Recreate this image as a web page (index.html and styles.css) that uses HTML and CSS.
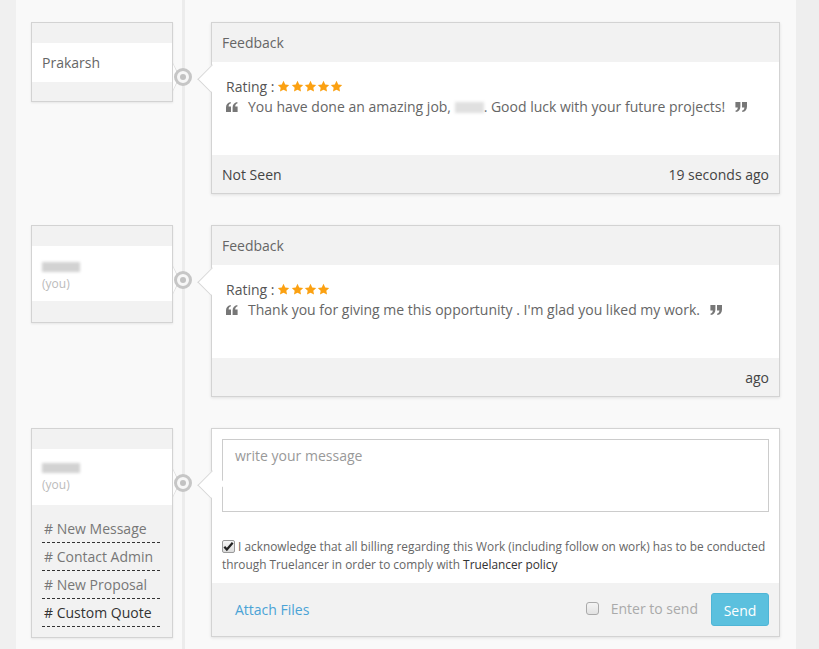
FILE: index.html
```html
<!DOCTYPE html>
<html>
<head>
<meta charset="utf-8">
<link rel="stylesheet" href="styles.css">
</head>
<body>
<div class="page">
  <div class="strip-left"></div>
  <main class="timeline">

    <div class="row">
      <div class="user-card">
        <div class="band band-top"></div>
        <div class="user-name name-single">Prakarsh</div>
        <div class="band band-bottom"></div>
      </div>
      <div class="connector"><span class="node"><span class="dot"></span></span></div>
      <div class="msg-card">
        <div class="msg-head">Feedback</div>
        <div class="msg-body">
          <div class="rating">Rating : <span class="stars">
            <svg viewBox="0 0 24 24"><path d="M12 1.5l3.2 6.6 7.3 1-5.3 5.1 1.3 7.2L12 18l-6.5 3.4 1.3-7.2L1.5 9.1l7.3-1z"/></svg><svg viewBox="0 0 24 24"><path d="M12 1.5l3.2 6.6 7.3 1-5.3 5.1 1.3 7.2L12 18l-6.5 3.4 1.3-7.2L1.5 9.1l7.3-1z"/></svg><svg viewBox="0 0 24 24"><path d="M12 1.5l3.2 6.6 7.3 1-5.3 5.1 1.3 7.2L12 18l-6.5 3.4 1.3-7.2L1.5 9.1l7.3-1z"/></svg><svg viewBox="0 0 24 24"><path d="M12 1.5l3.2 6.6 7.3 1-5.3 5.1 1.3 7.2L12 18l-6.5 3.4 1.3-7.2L1.5 9.1l7.3-1z"/></svg><svg viewBox="0 0 24 24"><path d="M12 1.5l3.2 6.6 7.3 1-5.3 5.1 1.3 7.2L12 18l-6.5 3.4 1.3-7.2L1.5 9.1l7.3-1z"/></svg>
          </span></div>
          <div class="quote">
            <svg class="q q-left" viewBox="0 0 12 10"><path d="M0 10V5.6C0 2.6 1.5.6 4.6 0L5 1.3C3.3 1.9 2.6 3 2.6 4.5H5V10ZM6.6 10V5.6C6.6 2.6 8.1.6 11.2 0L11.6 1.3C9.9 1.9 9.2 3 9.2 4.5H11.6V10Z"/></svg>
            <span>You have done an amazing job, <span class="blur-word"></span>. Good luck with your future projects!</span>
            <svg class="q q-right" viewBox="0 0 12 10"><path d="M12 0V4.4C12 7.4 10.5 9.4 7.4 10L7 8.7C8.7 8.1 9.4 7 9.4 5.5H7V0ZM5.4 0V4.4C5.4 7.4 3.9 9.4.8 10L.4 8.7C2.1 8.1 2.8 7 2.8 5.5H.4V0Z"/></svg>
          </div>
        </div>
        <div class="msg-foot"><span>Not Seen</span><span>19 seconds ago</span></div>
      </div>
    </div>

    <div class="row">
      <div class="user-card">
        <div class="band band-top"></div>
        <div class="user-name name-you">
          <span class="blur-name"></span>
          <span class="you">(you)</span>
        </div>
        <div class="band band-bottom2"></div>
      </div>
      <div class="connector"><span class="node"><span class="dot"></span></span></div>
      <div class="msg-card">
        <div class="msg-head">Feedback</div>
        <div class="msg-body">
          <div class="rating">Rating : <span class="stars">
            <svg viewBox="0 0 24 24"><path d="M12 1.5l3.2 6.6 7.3 1-5.3 5.1 1.3 7.2L12 18l-6.5 3.4 1.3-7.2L1.5 9.1l7.3-1z"/></svg><svg viewBox="0 0 24 24"><path d="M12 1.5l3.2 6.6 7.3 1-5.3 5.1 1.3 7.2L12 18l-6.5 3.4 1.3-7.2L1.5 9.1l7.3-1z"/></svg><svg viewBox="0 0 24 24"><path d="M12 1.5l3.2 6.6 7.3 1-5.3 5.1 1.3 7.2L12 18l-6.5 3.4 1.3-7.2L1.5 9.1l7.3-1z"/></svg><svg viewBox="0 0 24 24"><path d="M12 1.5l3.2 6.6 7.3 1-5.3 5.1 1.3 7.2L12 18l-6.5 3.4 1.3-7.2L1.5 9.1l7.3-1z"/></svg>
          </span></div>
          <div class="quote">
            <svg class="q q-left" viewBox="0 0 12 10"><path d="M0 10V5.6C0 2.6 1.5.6 4.6 0L5 1.3C3.3 1.9 2.6 3 2.6 4.5H5V10ZM6.6 10V5.6C6.6 2.6 8.1.6 11.2 0L11.6 1.3C9.9 1.9 9.2 3 9.2 4.5H11.6V10Z"/></svg>
            <span>Thank you for giving me this opportunity . I'm glad you liked my work.</span>
            <svg class="q q-right" viewBox="0 0 12 10"><path d="M12 0V4.4C12 7.4 10.5 9.4 7.4 10L7 8.7C8.7 8.1 9.4 7 9.4 5.5H7V0ZM5.4 0V4.4C5.4 7.4 3.9 9.4.8 10L.4 8.7C2.1 8.1 2.8 7 2.8 5.5H.4V0Z"/></svg>
          </div>
        </div>
        <div class="msg-foot foot-right"><span>ago</span></div>
      </div>
    </div>

    <div class="row">
      <div class="user-card">
        <div class="band band-top"></div>
        <div class="user-name name-you name-you3">
          <span class="blur-name"></span>
          <span class="you">(you)</span>
        </div>
        <div class="actions">
          <a class="action">#&nbsp;New Message</a>
          <a class="action">#&nbsp;Contact Admin</a>
          <a class="action">#&nbsp;New Proposal</a>
          <a class="action action-dark">#&nbsp;Custom Quote</a>
        </div>
      </div>
      <div class="connector"><span class="node"><span class="dot"></span></span></div>
      <div class="msg-card compose">
        <div class="compose-body">
          <div class="textarea">write your message</div>
          <div class="ack">
            <span class="cb cb-checked"><svg viewBox="0 0 10 10"><path d="M1.2 5.2l2.3 2.6L8.8 1.6" /></svg></span>
            I acknowledge that all billing regarding this Work (including follow on work) has to be conducted through Truelancer in order to comply with <span class="policy">Truelancer policy</span>
          </div>
        </div>
        <div class="compose-foot">
          <a class="attach">Attach Files</a>
          <div class="send-wrap">
            <span class="cb cb-empty"></span>
            <span class="enter">Enter to send</span>
            <span class="send">Send</span>
          </div>
        </div>
      </div>
    </div>

  </main>
  <div class="strip-right"></div>
</div>
</body>
</html>
```

FILE: styles.css
```css
* { box-sizing: border-box; }
html, body { margin: 0; padding: 0; }
body {
  font-family: "Open Sans", "Liberation Sans", sans-serif;
  font-size: 14px;
  color: #666;
  background: #efefef;
}
.page {
  display: flex;
  min-height: 649px;
}
.strip-left {
  width: 16px;
  background: #f0f0f0;
}
.timeline {
  width: 780px;
  background-color: #f9f9f9;
  background-image: linear-gradient(to right, transparent 166px, #ececec 166px, #ececec 169px, transparent 169px);
  padding: 22px 16px 0 15px;
}
.strip-right {
  flex: 1;
  background: #eeeeee;
}
.row {
  display: flex;
  align-items: flex-start;
  margin-bottom: 31px;
}

/* user card */
.user-card {
  position: relative;
  width: 142px;
  border: 1px solid #d3d3d3;
  background: #f2f2f2;
  box-shadow: 0 1px 2px rgba(0,0,0,0.08);
}
.user-card::before {
  content: "";
  position: absolute;
  right: -8px;
  top: 40px;
  border-left: 7px solid #d6d6d6;
  border-top: 14px solid transparent;
  border-bottom: 14px solid transparent;
}
.user-card::after {
  content: "";
  position: absolute;
  right: -7px;
  top: 41px;
  border-left: 6px solid #fdfdfd;
  border-top: 13px solid transparent;
  border-bottom: 13px solid transparent;
}
.band-top { height: 20px; }
.band-bottom { height: 19px; }
.band-bottom2 { height: 21px; }
.user-name {
  background: #fff;
  padding: 0 10px;
}
.name-single {
  height: 39px;
  line-height: 39px;
  color: #666;
}
.name-you {
  height: 55px;
  padding-top: 11px;
  display: flex;
  flex-direction: column;
  align-items: flex-start;
}
.name-you3 { height: 56px; padding-top: 9px; }
.blur-name {
  display: block;
  width: 38px;
  height: 10px;
  margin: 5px 0 4px;
  background: #d2d2d2;
  filter: blur(1.5px);
}
.you {
  font-size: 12px;
  line-height: 16px;
  color: #bbb;
}
.actions {
  padding: 10px 10px 10px;
}
.action {
  display: block;
  padding: 4px 1px 4px 2px;
  line-height: 20px;
  color: #777;
  background-image: repeating-linear-gradient(to right, #333 0, #333 3px, transparent 3px, transparent 5px);
  background-size: 100% 1px;
  background-repeat: no-repeat;
  background-position: left bottom;
}
.action-dark { color: #333; }

/* connector */
.connector {
  width: 38px;
  flex: none;
  padding-top: 46px;
  padding-left: 1px;
}
.node {
  position: relative;
  z-index: 2;
  display: flex;
  align-items: center;
  justify-content: center;
  width: 18px;
  height: 18px;
  border-radius: 50%;
  border: 3px solid #c6c6c6;
  background: #f7f7f7;
}
.dot {
  width: 6px;
  height: 6px;
  border-radius: 50%;
  background: #c2c2c2;
}

/* message card */
.msg-card {
  position: relative;
  width: 569px;
  border: 1px solid #d3d3d3;
  background: #fff;
  box-shadow: 0 1px 3px rgba(0,0,0,0.1);
}
.msg-card::before {
  content: "";
  position: absolute;
  left: -11px;
  top: 45px;
  width: 20px;
  height: 20px;
  background: #fff;
  border-left: 1px solid #d6d6d6;
  border-bottom: 1px solid #d6d6d6;
  transform: rotate(45deg) scaleX(0.9);
}
.msg-head {
  position: relative;
  height: 39px;
  line-height: 39px;
  padding: 0 10px;
  background: #f2f2f2;
  color: #666;
}
.msg-body {
  height: 93px;
  padding: 15px 10px 0 14px;
  line-height: 19px;
  color: #666;
}
.rating {
  display: flex;
  align-items: center;
  color: #555;
}
.stars {
  display: inline-flex;
  margin-left: 3px;
}
.stars svg {
  width: 13px;
  height: 13px;
  margin-right: 0.2px;
  fill: #fba112;
}
.quote {
  display: flex;
  align-items: center;
  margin-top: 1px;
}
.q {
  width: 12px;
  height: 10px;
  fill: #777;
  flex: none;
}
.q-left { margin-right: 10px; }
.q-right { margin-left: 10px; }
.blur-word {
  display: inline-block;
  width: 29px;
  height: 11px;
  vertical-align: -1px;
  background: #e0e0e0;
  filter: blur(1.5px);
}
.msg-foot {
  height: 38px;
  line-height: 40px;
  padding: 0 10px;
  background: #f2f2f2;
  color: #444;
  display: flex;
  justify-content: space-between;
}
.foot-right { justify-content: flex-end; }

/* compose */
.compose-body {
  padding: 10px 10px 10px;
}
.textarea {
  height: 73px;
  border: 1px solid #cccccc;
  padding: 6px 12px;
  line-height: 19px;
  color: #999;
}
.ack {
  margin-top: 25px;
  font-size: 11.85px;
  line-height: 18px;
  color: #666;
}
.policy { color: #333; }
.cb {
  display: inline-block;
  width: 13px;
  height: 13px;
  border: 1px solid #9a9a9a;
  border-radius: 2px;
  background: linear-gradient(#f6f6f6, #dcdcdc);
  vertical-align: -2px;
  position: relative;
}
.cb-checked svg {
  display: block;
  width: 11px;
  height: 11px;
  fill: none;
  stroke: #222;
  stroke-width: 2;
}
.compose-foot {
  height: 53px;
  background: #f2f2f2;
  display: flex;
  justify-content: space-between;
  align-items: flex-start;
  padding: 10px 10px 0 23px;
}
.attach {
  color: #4aa3d6;
  line-height: 33px;
}
.send-wrap {
  display: flex;
  align-items: center;
  height: 33px;
}
.cb-empty {
  width: 13px;
  height: 13px;
  border-radius: 3px;
  border-color: #aaa;
  background: linear-gradient(#f4f4f4, #e2e2e2);
  vertical-align: 0;
  margin-top: -3px;
  margin-right: 0;
}
.enter {
  color: #aaa;
  margin-left: 12px;
  margin-right: 13px;
  margin-top: -3px;
}
.send {
  display: inline-block;
  width: 58px;
  height: 33px;
  line-height: 33px;
  text-align: center;
  background: #5bc0de;
  border: 1px solid #4fb5d6;
  border-radius: 3px;
  color: #fff;
}
```
